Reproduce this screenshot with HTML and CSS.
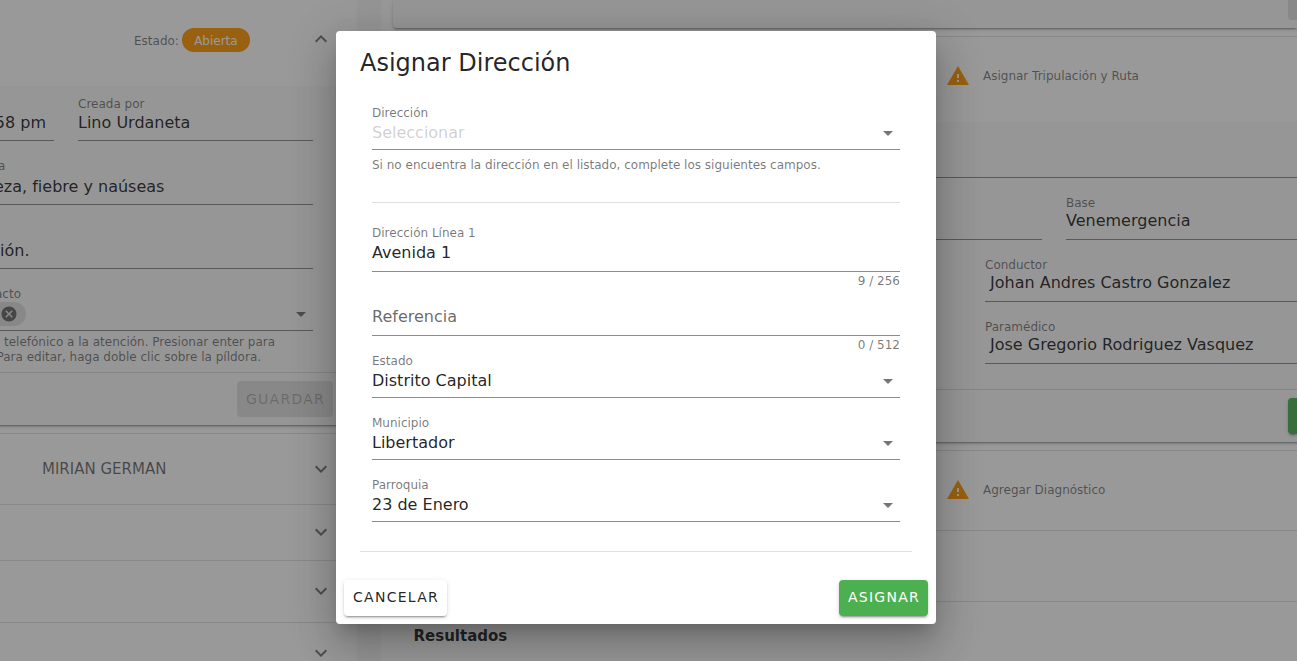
FILE: index.html
```html
<!DOCTYPE html>
<html lang="es">
<head>
<meta charset="utf-8">
<title>Asignar Dirección</title>
<link rel="stylesheet" href="styles.css">
</head>
<body>
<svg class="defs" width="0" height="0">
  <symbol id="chev" viewBox="0 0 24 24"><path d="M7.41 8.58L12 13.17L16.59 8.58L18 10L12 16L6 10L7.41 8.58Z"/></symbol>
  <symbol id="chev-up" viewBox="0 0 24 24"><path d="M7.41 15.41L12 10.83L16.59 15.41L18 14L12 8L6 14L7.41 15.41Z"/></symbol>
  <symbol id="drop" viewBox="0 0 24 24"><path d="M7 10L12 15L17 10H7Z"/></symbol>
  <symbol id="alert" viewBox="0 0 24 24"><path d="M13 14H11V10H13M13 18H11V16H13M1 21H23L12 2L1 21Z"/></symbol>
  <symbol id="close" viewBox="0 0 24 24"><path d="M12 2C17.53 2 22 6.47 22 12S17.53 22 12 22 2 17.53 2 12 6.47 2 12 2M15.59 7L12 10.59L8.41 7L7 8.41L10.59 12L7 15.59L8.41 17L12 13.41L15.59 17L17 15.59L13.41 12L17 8.41L15.59 7Z"/></symbol>
</svg>
<main class="page">
  <section class="left">
    <header class="status"><span class="small">Estado:</span><span class="pill">Abierta</span><svg class="icon"><use href="#chev-up"/></svg></header>
    <div class="sheet attention">
      <div class="fields">
        <div class="pair">
          <div class="field v26 date"><label>&nbsp;</label><div class="value end">58 pm</div></div>
          <div class="field v26 creator"><label>Creada por</label><div class="value">Lino Urdaneta</div></div>
        </div>
        <div class="field area reason"><label>a</label><div class="value">eza, fiebre y naúseas</div></div>
        <div class="field area note"><label>&nbsp;</label><div class="value">ión.</div></div>
        <div class="field contact"><label>acto</label><div class="value"><span class="chip"><svg><use href="#close"/></svg></span><svg class="icon"><use href="#drop"/></svg></div></div>
        <p class="hint"><span>telefónico a la atención. Presionar enter para</span><span class="second">Para editar, haga doble clic sobre la píldora.</span></p>
      </div>
      <footer class="sheet-foot"><button class="btn disabled">GUARDAR</button></footer>
    </div>
    <div class="row person"><span>MIRIAN GERMAN</span><svg class="icon"><use href="#chev"/></svg></div>
    <div class="row r2"><svg class="icon"><use href="#chev"/></svg></div>
    <div class="row r3"><svg class="icon"><use href="#chev"/></svg></div>
    <div class="row r4"><svg class="icon"><use href="#chev"/></svg></div>
  </section>
  <section class="right">
    <div class="sheet top-sheet"><span class="btn-edge"></span></div>
    <div class="step crew"><svg class="icon"><use href="#alert"/></svg><span class="small">Asignar Tripulación y Ruta</span></div>
    <div class="sheet crew-sheet">
      <div class="blank-line"></div>
      <div class="base-row">
        <div class="field v25 blank"></div>
        <div class="field v25 grow"><label>Base</label><div class="value">Venemergencia</div></div>
      </div>
      <div class="field v25 member"><label>Conductor</label><div class="value">Johan Andres Castro Gonzalez</div></div>
      <div class="field v25 member"><label>Paramédico</label><div class="value">Jose Gregorio Rodriguez Vasquez</div></div>
      <footer class="crew-foot"><span class="btn-edge green"></span></footer>
    </div>
    <div class="step diag"><svg class="icon"><use href="#alert"/></svg><span class="small">Agregar Diagnóstico</span></div>
    <div class="step empty"></div>
    <div class="step results"><b>Resultados</b></div>
  </section>
</main>
<div class="overlay">
  <div class="dialog">
    <h1>Asignar Dirección</h1>
    <div class="form">
      <div class="field"><label>Dirección</label><div class="value placeholder">Seleccionar<svg class="icon"><use href="#drop"/></svg></div></div>
      <p class="note-text">Si no encuentra la dirección en el listado, complete los siguientes campos.</p>
      <hr>
      <div class="field area v27"><label>Dirección Línea 1</label><div class="value">Avenida 1</div></div>
      <div class="counter">9 / 256</div>
      <div class="field reference"><div class="value">Referencia</div></div>
      <div class="counter">0 / 512</div>
      <div class="field first"><label>Estado</label><div class="value">Distrito Capital<svg class="icon"><use href="#drop"/></svg></div></div>
      <div class="field next"><label>Municipio</label><div class="value">Libertador<svg class="icon"><use href="#drop"/></svg></div></div>
      <div class="field next"><label>Parroquia</label><div class="value">23 de Enero<svg class="icon"><use href="#drop"/></svg></div></div>
    </div>
    <hr class="wide">
    <div class="actions"><button class="btn plain">CANCELAR</button><button class="btn primary">ASIGNAR</button></div>
  </div>
</div>
</body>
</html>
```
FILE: styles.css
```css
* { box-sizing: border-box; }
body { margin: 0; height: 661px; overflow: hidden; background: #f8f8f8; font-family: "DejaVu Sans", sans-serif; font-size: 16px; color: rgba(0,0,0,.87); }
.defs { position: absolute; }
svg { fill: rgba(0,0,0,.54); flex: none; }
.icon { width: 24px; height: 24px; }
h1, p, hr { margin: 0; }
.small { font-size: 12px; color: rgba(0,0,0,.54); }

.page { display: flex; gap: 24px; height: 661px; overflow: hidden; }
.left { width: 357px; flex: none; background: #fff; overflow: hidden; }
.right { flex: 1; min-width: 0; background: #fff; overflow: hidden; }
.sheet { background: #fafafa; box-shadow: 0 3px 1px -2px rgba(0,0,0,.2), 0 2px 2px rgba(0,0,0,.14), 0 1px 5px rgba(0,0,0,.12); }

/* form fields */
.field { height: 45px; border-bottom: 1px solid rgba(0,0,0,.45); }
.field label { display: block; font-size: 12px; line-height: 16px; color: rgba(0,0,0,.54); white-space: nowrap; }
.field .value { display: flex; align-items: center; height: 20px; line-height: 20px; margin-top: 2px; white-space: nowrap; }
.field .value .icon { margin-left: auto; }
.field.area { height: 47px; }
.field.area .value { margin-top: 3px; }
.field.v27 .value { margin-top: 2px; }
.field.v26 .value { margin-top: 1px; }
.field.v25 .value { margin-top: 0; }

/* left column */
.status { display: flex; align-items: center; height: 86px; padding: 0 24px 6px 134px; }
.status .small { padding-top: 2px; }
.pill { margin-left: 3px; height: 24px; width: 68px; line-height: 26px; text-align: center; border-radius: 12px; background: #ff9800; color: #fff; font-size: 12px; }
.status .icon { margin: 0 0 2px auto; }
.attention { height: 339px; margin-left: -6px; padding-left: 6px; clip-path: inset(0 0 -8px 0); }
.fields { height: 286px; padding: 10px 44px 0 0; }
.pair { display: flex; gap: 24px; }
.date { width: 54px; }
.date .value { justify-content: flex-end; padding-right: 8px; }
.creator { flex: 1; }
.reason { margin-top: 17px; }
.reason .value { margin-left: -6px; }
.reason label { margin-left: -2px; }
.note { margin-top: 17px; }
.contact { margin-top: 17px; }
.contact label { margin-left: -5px; }
.chip { display: flex; align-items: center; justify-content: flex-end; width: 26px; height: 24px; padding-right: 8px; border-radius: 0 12px 12px 0; background: #e0e0e0; }
.chip svg { width: 18px; height: 18px; }
.hint { padding: 4px 0 0 4px; font-size: 12px; line-height: 14.5px; color: rgba(0,0,0,.54); white-space: nowrap; }
.hint span { display: block; }
.hint .second { margin-left: -7.5px; }
.sheet-foot { display: flex; justify-content: flex-end; height: 53px; margin-left: -6px; padding: 8px 24px 0 0; border-top: 1px solid rgba(0,0,0,.12); }
.btn { height: 36px; padding: 0 0 2px 1px; border: 0; border-radius: 4px; font: 14px "DejaVu Sans", sans-serif; letter-spacing: 1.25px; color: rgba(0,0,0,.87); }
.disabled { width: 96px; padding-bottom: 0; background: #e0e0e0; color: rgba(0,0,0,.26); }
.row { display: flex; align-items: center; padding-right: 24px; border-top: 1px solid rgba(0,0,0,.12); }
.row .icon { margin-left: auto; }
.person { height: 71px; margin-top: 8px; padding-left: 42px; font-size: 15px; color: rgba(0,0,0,.6); }
.r2 { height: 56px; padding-bottom: 2px; }
.r3 { height: 62px; padding-bottom: 2px; }
.r4 { height: 62px; padding-bottom: 2px; }

/* right column */
.top-sheet { height: 28px; margin-left: 12px; display: flex; justify-content: flex-end; border-radius: 0 0 0 4px; }
.btn-edge { width: 9px; height: 20px; border-radius: 0 0 0 4px; background: #e0e0e0; }
.step { display: flex; align-items: center; margin-left: 12px; padding-left: 553px; border-top: 1px solid rgba(0,0,0,.12); }
.step .icon { fill: #ff9800; margin-right: 13px; }
.crew { height: 86px; margin-top: 8px; padding-bottom: 7px; }
.crew-sheet { height: 320px; margin: 0 -6px 0 12px; padding-right: 6px; clip-path: inset(0 0 -8px -8px); }
.blank-line { height: 56px; border-bottom: 1px solid rgba(0,0,0,.45); }
.base-row { display: flex; gap: 24px; margin-top: 17px; }
.blank { width: 649px; }
.grow { flex: 1; }
.member { margin: 17px 0 0 592px; }
.member .value { padding-left: 5px; }
.crew-foot { display: flex; justify-content: flex-end; margin-top: 25px; height: 53px; padding-top: 8px; border-top: 1px solid rgba(0,0,0,.12); }
.btn-edge.green { height: 36px; border-radius: 4px 0 0 4px; background: #4caf50; box-shadow: 0 3px 1px -2px rgba(0,0,0,.2), 0 2px 2px rgba(0,0,0,.14), 0 1px 5px rgba(0,0,0,.12); }
.diag { height: 80px; margin-top: 8px; padding-bottom: 2px; }
.empty { height: 71px; }
.results { height: 69px; padding-left: 20.5px; font-size: 15px; }

/* dialog */
.overlay { position: absolute; inset: 0; display: flex; align-items: flex-start; justify-content: center; padding: 31px 25px 0 0; background: rgba(33,33,33,.46); }
.dialog { width: 600px; height: 593px; border-radius: 4px; background: #fff; box-shadow: 0 11px 15px -7px rgba(0,0,0,.2), 0 24px 38px 3px rgba(0,0,0,.14), 0 9px 46px 8px rgba(0,0,0,.12); }
.dialog h1 { height: 74px; padding: 16px 24px 0; font-size: 24px; font-weight: 400; line-height: 32px; }
.form { height: 446px; padding: 0 36px; }
.dialog .placeholder { color: rgba(0,0,0,.2); }
.note-text { margin-top: 7px; height: 16px; line-height: 16px; font-size: 12px; color: rgba(0,0,0,.54); }
hr { height: 1px; border: 0; background: rgba(0,0,0,.12); }
.form hr { margin: 29px 0 22px; }
.counter { height: 18px; line-height: 18px; font-size: 12px; text-align: right; color: rgba(0,0,0,.54); }
.reference { height: 46px; padding-top: 15px; color: rgba(0,0,0,.6); }
.first { margin-top: -1px; }
.next { margin-top: 17px; }
.wide { margin: 0 24px; }
.actions { display: flex; justify-content: space-between; padding: 28px 8px 0; }
.plain, .primary { box-shadow: 0 3px 1px -2px rgba(0,0,0,.2), 0 2px 2px rgba(0,0,0,.14), 0 1px 5px rgba(0,0,0,.12); }
.plain { width: 103px; background: #fff; }
.primary { width: 89px; background: #4caf50; color: #fff; }
```
